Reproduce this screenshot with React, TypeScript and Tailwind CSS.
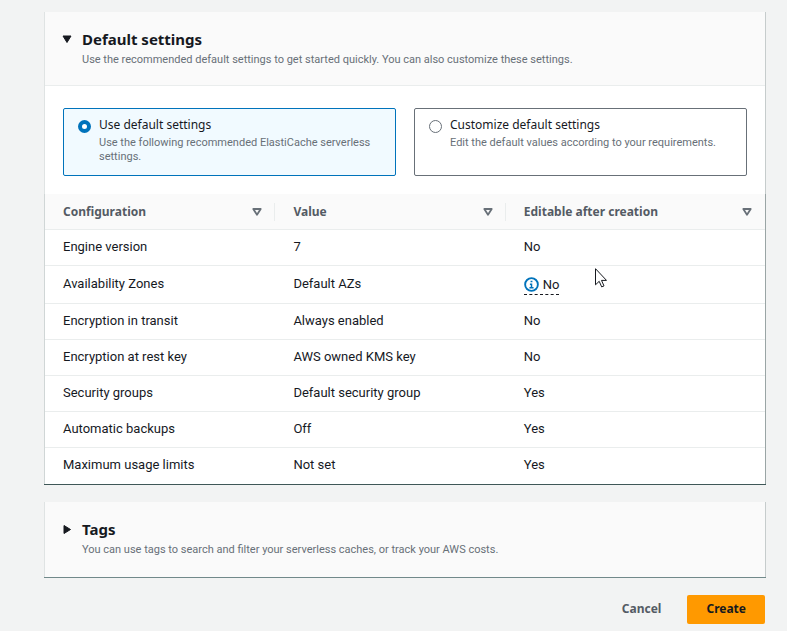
import { useState } from "react";

const columns = [
  { name: "Configuration", width: "w-[32%]" },
  { name: "Value", width: "w-[32%]" },
  { name: "Editable after creation", width: "w-[36%]" },
];

const rows = [
  { name: "Engine version", value: "7", editable: "No" },
  { name: "Availability Zones", value: "Default AZs", editable: "No", info: true },
  { name: "Encryption in transit", value: "Always enabled", editable: "No" },
  { name: "Encryption at rest key", value: "AWS owned KMS key", editable: "No" },
  { name: "Security groups", value: "Default security group", editable: "Yes" },
  { name: "Automatic backups", value: "Off", editable: "Yes" },
  { name: "Maximum usage limits", value: "Not set", editable: "Yes" },
];

const choices = [
  {
    id: "default",
    label: "Use default settings",
    text: "Use the following recommended ElastiCache serverless settings.",
  },
  {
    id: "custom",
    label: "Customize default settings",
    text: "Edit the default values according to your requirements.",
  },
];

function Caret({ open }: { open: boolean }) {
  return (
    <svg viewBox="0 0 10 10" className="size-2.5" aria-hidden="true">
      <path
        d={open ? "M1 2h8L5 8.5z" : "M2 1.5v8L8.5 5.5z"}
        fill="#16191f"
        stroke="#16191f"
        strokeLinejoin="round"
      />
    </svg>
  );
}

function SectionHeader({ title, text, open }: { title: string; text: string; open: boolean }) {
  return (
    <div className="flex gap-2.5 px-[17px] pt-4 pb-[15px]">
      <button type="button" aria-label={title} aria-expanded={open} className="flex h-[22px] items-center">
        <Caret open={open} />
      </button>
      <div>
        <h2 className="text-[15px] leading-[22px] font-bold text-[#16191f]">{title}</h2>
        <p className="font-[Roboto,sans-serif] text-[11px] leading-5 text-[#687078]">{text}</p>
      </div>
    </div>
  );
}

function Cursor() {
  return (
    <svg viewBox="0 0 12 20" className="absolute top-0.5 left-[89px] h-5 w-3" aria-hidden="true">
      <path d="M.5.7v16.1l3.7-3.5 2.5 5.6 2.3-1-2.5-5.5h5z" fill="#fff" stroke="#16191f" />
    </svg>
  );
}

export default function App() {
  const [choice, setChoice] = useState("default");

  return (
    <main className="min-h-screen bg-[#f2f3f3] pt-3 pr-[21px] pb-[7px] pl-11 font-['Noto_Sans','Open_Sans',sans-serif] text-xs text-[#16191f]">
      <section className="border-b border-[#3f5757] bg-white">
        <div className="border-r border-l border-r-[#c6cccc] border-l-[#dfe3e3]">
          <div className="border-b border-[#eaeded] bg-[#fafafa]">
            <SectionHeader
              title="Default settings"
              text="Use the recommended default settings to get started quickly. You can also customize these settings."
              open
            />
          </div>
          <div className="grid grid-cols-2 gap-[18px] px-[18px] pt-[22px] pb-[18px]">
            {choices.map((c) => (
              <label
                key={c.id}
                className="flex h-[68px] gap-2 rounded-xs border border-[#687078] bg-white pt-[7px] pr-2 pl-3.5 has-checked:border-[#0073bb] has-checked:bg-[#f1faff]"
              >
                <input
                  type="radio"
                  name="settings"
                  checked={choice === c.id}
                  onChange={() => setChoice(c.id)}
                  className="mt-1 size-[13px] shrink-0 appearance-none rounded-full border border-[#687078] bg-white checked:border-4 checked:border-[#0073bb]"
                />
                <span>
                  <span className="block leading-[18px]">{c.label}</span>
                  <span className="mt-0.5 block font-[Roboto,sans-serif] text-[11px] leading-[14px] text-[#687078]">{c.text}</span>
                </span>
              </label>
            ))}
          </div>
        </div>
        <div className="border-r border-l border-r-[#9aa5a5] border-l-[#d0d6d6]">
          <table className="w-full table-fixed border-separate border-spacing-0 text-left">
            <thead className="bg-[#fafafa] text-[#545b64]">
              <tr className="h-9">
                {columns.map((col) => (
                  <th key={col.name} className={`${col.width} group border-b border-[#eaeded] p-0 font-bold`}>
                    <div className="flex h-[18px] items-center justify-between border-r border-[#eaeded] pr-3 pl-[18px] group-last:border-r-0 group-last:pr-[13px]">
                      {col.name}
                      <button type="button" aria-label={`Sort by ${col.name}`}>
                        <svg viewBox="0 0 10 10" className="size-2.5" aria-hidden="true">
                          <path d="M1.3 2h7.4L5 7.8z" fill="none" stroke="#687078" strokeWidth="1.8" strokeLinejoin="round" />
                        </svg>
                      </button>
                    </div>
                  </th>
                ))}
              </tr>
            </thead>
            <tbody className="font-[Roboto,sans-serif] text-[13px] leading-4 [&>tr:last-child>td]:border-b-0 [&_td]:border-b [&_td]:border-[#eaeded] [&_td]:p-0 [&_td]:pb-0.5 [&_td]:pl-[18px]">
              {rows.map((row) => (
                <tr key={row.name} className={row.info ? "h-[38px]" : "h-9"}>
                  <td>{row.name}</td>
                  <td>{row.value}</td>
                  <td className="relative">
                    {row.info ? (
                      <>
                        <span className="mt-1 inline-flex h-5 items-center gap-1 border-b border-dashed border-[#16191f]">
                          <svg viewBox="0 0 16 16" className="size-[15px]" fill="none" stroke="#0073bb" strokeWidth="2" aria-hidden="true">
                            <circle cx="8" cy="8" r="6.8" />
                            <path d="M8 11.8V7.6H6.3M5.8 11.5h4.4M7 4.8h2" strokeWidth="1.6" />
                          </svg>
                          {row.editable}
                        </span>
                        <Cursor />
                      </>
                    ) : (
                      row.editable
                    )}
                  </td>
                </tr>
              ))}
            </tbody>
          </table>
        </div>
      </section>

      <section className="mt-[17px] border-b border-[#71898a] bg-[#fafafa]">
        <div className="border-r border-l border-r-[#c6cccc] border-l-[#dfe3e3] pb-0.5">
          <SectionHeader
            title="Tags"
            text="You can use tags to search and filter your serverless caches, or track your AWS costs."
            open={false}
          />
        </div>
      </section>

      <div className="mt-[17px] flex justify-end gap-2 pr-px font-bold">
        <button type="button" className="h-[29px] px-[18px] pb-0.5 text-[#545b64]">
          Cancel
        </button>
        <button type="button" className="h-[29px] rounded-xs bg-[#ff9900] px-[19px] pb-0.5 text-[#16191f]">
          Create
        </button>
      </div>
    </main>
  );
}
